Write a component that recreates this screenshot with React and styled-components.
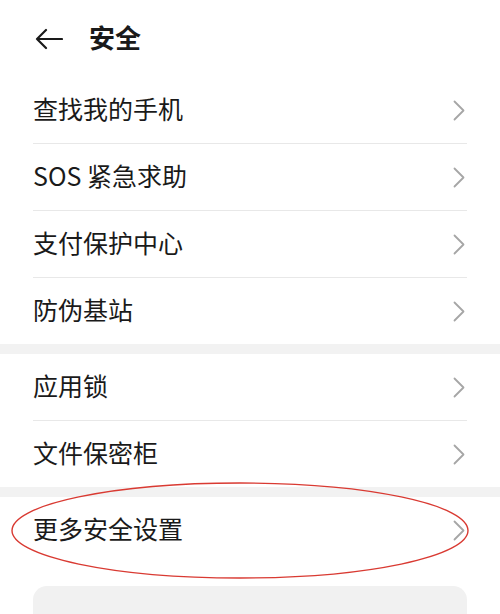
import React from "react";
import styled, { createGlobalStyle } from "styled-components";

const GlobalStyle = createGlobalStyle`
    html, body {
        margin: 0;
        padding: 0;
        background: #fff;
    }
    body {
        font-family: "Noto Sans CJK SC", "Noto Sans", sans-serif;
        color: #1a1a1a;
    }
`;

const groups = [
    ["查找我的手机", "SOS 紧急求助", "支付保护中心", "防伪基站"],
    ["应用锁", "文件保密柜"],
    ["更多安全设置"],
];

const Chevron = () => (
    <svg width="12" height="21" viewBox="0 0 12 21" fill="none">
        <polyline points="1.5,1.5 10.5,10.5 1.5,19.5" stroke="#a6a6a6" strokeWidth="1.8" strokeLinecap="round" strokeLinejoin="round" />
    </svg>
);

const BackArrow = () => (
    <svg width="28" height="22" viewBox="0 0 28 22" fill="none">
        <path d="M27 11H2M11 2L2 11L11 20" stroke="#1a1a1a" strokeWidth="2.2" strokeLinecap="round" strokeLinejoin="round" />
    </svg>
);

const App = () => {
    return (
        <Page>
            <GlobalStyle />
            <Header>
                <BackArrow />
                <Title>安全</Title>
            </Header>
            {groups.map((items, gi) => (
                <React.Fragment key={gi}>
                    {gi > 0 && <Band />}
                    <Group>
                        {items.map((label) => (
                            <Row key={label}>
                                <Label>{label}</Label>
                                <Chevron />
                            </Row>
                        ))}
                    </Group>
                </React.Fragment>
            ))}
            <Card />
            <Mark width="500" height="614" viewBox="0 0 500 614">
                <ellipse cx="240" cy="530.5" rx="228" ry="47.5" fill="none" stroke="#d93a32" strokeWidth="1.4" />
            </Mark>
        </Page>
    );
};

export default App;

const Page = styled.div`
    position: relative;
    width: 500px;
    height: 614px;
    overflow: hidden;
    background: #fff;
`;

const Header = styled.header`
    display: flex;
    align-items: center;
    height: 77px;
    padding-left: 35px;
    box-sizing: border-box;

    svg{
        margin-right: 26px;
        margin-top: 1px;
    }
`;

const Title = styled.h1`
    margin: 0 0 3px;
    font-size: 26px;
    font-weight: 700;
    line-height: 1;
    color: #1a1a1a;
`;

const Group = styled.div`
    padding: 0 33px;
`;

const Row = styled.div`
    display: flex;
    align-items: center;
    justify-content: space-between;
    height: 66px;
    padding-right: 2px;

    & + &{
        border-top: 1px solid #e8e8e8;
    }
`;

const Label = styled.span`
    font-size: 25px;
    line-height: 1;
    color: #1a1a1a;
    margin-bottom: 3px;
`;

const Band = styled.div`
    height: 10px;
    background: #f2f2f2;
`;

const Card = styled.div`
    margin: 23px 33px 0;
    height: 60px;
    border-radius: 14px;
    background: #f1f1f1;
`;

const Mark = styled.svg`
    position: absolute;
    top: 0;
    left: 0;
    pointer-events: none;
`;
